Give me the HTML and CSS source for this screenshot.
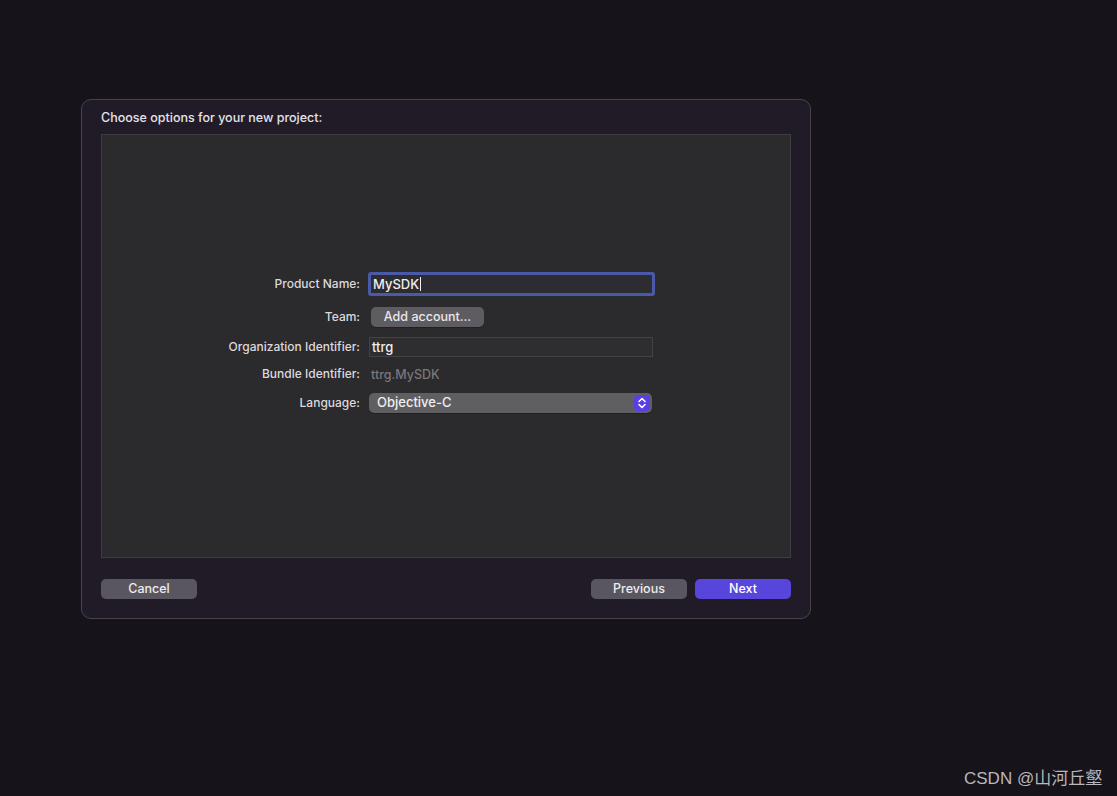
FILE: index.html
```html
<!DOCTYPE html>
<html>
<head>
<meta charset="utf-8">
<link rel="stylesheet" href="styles.css">
</head>
<body>
<div class="page">
  <div class="dialog">
    <div class="title">Choose options for your new project:</div>
    <div class="panel">
      <div class="form">
        <div class="row product">
          <div class="label">Product Name:</div>
          <div class="field focus"><span>MySDK</span><span class="caret"></span></div>
        </div>
        <div class="row team">
          <div class="label">Team:</div>
          <div class="btn-add">Add account...</div>
        </div>
        <div class="row org">
          <div class="label">Organization Identifier:</div>
          <div class="field plain">ttrg</div>
        </div>
        <div class="row bundle">
          <div class="label">Bundle Identifier:</div>
          <div class="value-dim">ttrg.MySDK</div>
        </div>
        <div class="row lang">
          <div class="label">Language:</div>
          <div class="popup">
            <span>Objective-C</span>
            <span class="stepper">
              <svg width="10" height="14" viewBox="0 0 10 14"><path d="M2 5.5 L5 2.5 L8 5.5 M2 8.5 L5 11.5 L8 8.5" fill="none" stroke="#fff" stroke-width="1.6" stroke-linecap="round" stroke-linejoin="round"/></svg>
            </span>
          </div>
        </div>
      </div>
    </div>
    <div class="footer">
      <div class="btn gray">Cancel</div>
      <div class="right">
        <div class="btn gray">Previous</div>
        <div class="btn primary">Next</div>
      </div>
    </div>
  </div>
  <div class="watermark">CSDN @山河丘壑</div>
</div>
</body>
</html>
```

FILE: styles.css
```css
html, body {
  margin: 0;
  padding: 0;
  background: #16131a;
  height: 100%;
}
body {
  font-family: "Inter", "Liberation Sans", "Noto Sans CJK SC", sans-serif;
  font-size: 13px;
  font-weight: 500;
  color: #e2dfe6;
}
.page {
  position: relative;
  width: 1117px;
  height: 796px;
  padding: 99px 0 0 81px;
  box-sizing: border-box;
}
.dialog {
  width: 730px;
  height: 520px;
  box-sizing: border-box;
  background: #211b27;
  border: 1px solid #48434f;
  border-radius: 10px;
  padding: 10px 19px 0 19px;
  display: flex;
  flex-direction: column;
}
.title {
  font-size: 12.5px;
  line-height: 16px;
  height: 16px;
  color: #e6e3ea;
}
.panel {
  margin-top: 8px;
  height: 424px;
  box-sizing: border-box;
  background: #2b2a2c;
  border: 1px solid #3f3d42;
  display: flex;
  flex-direction: column;
  padding-top: 137px;
}
.form {
  display: flex;
  flex-direction: column;
}
.row {
  display: flex;
  align-items: center;
}
.label {
  width: 258px;
  text-align: right;
  font-size: 12px;
  line-height: 14px;
  color: #dcd9de;
  padding-right: 8px;
  flex: none;
}
.product .label {
  padding-bottom: 1px;
}
.field {
  box-sizing: border-box;
  height: 23px;
  font-size: 13px;
  color: #eeeeee;
  display: flex;
  align-items: center;
}
.field.focus {
  width: 287px;
  border: 3px solid #4a5aa8;
  border-radius: 3px;
  background: #2d2c30;
  padding-left: 2px;
  padding-bottom: 1px;
  height: 24px;
}
.caret {
  display: inline-block;
  width: 1px;
  height: 14px;
  background: #f0f0f0;
  margin-left: 1px;
}
.team {
  margin-top: 10px;
  height: 21px;
}
.btn-add {
  margin-left: 3px;
  width: 113px;
  height: 20px;
  box-sizing: border-box;
  background: #5e5c60;
  border-radius: 5px;
  font-size: 12.5px;
  color: #eae8ec;
  display: flex;
  align-items: center;
  justify-content: center;
  padding-bottom: 1px;
  box-shadow: 0 1px 0 rgba(0,0,0,0.25);
}
.org {
  margin-top: 10px;
}
.field.plain {
  margin-left: 1px;
  width: 284px;
  height: 20px;
  border: 1px solid #434144;
  background: #2e2d2f;
  padding-left: 2px;
}
.bundle {
  margin-top: 7px;
  height: 20px;
}
.value-dim {
  color: #79777b;
  font-size: 12.5px;
  padding-left: 3px;
}
.lang {
  margin-top: 9px;
}
.popup {
  margin-left: 1px;
  width: 283px;
  height: 20px;
  box-sizing: border-box;
  background: #5f5e60;
  border-radius: 5px;
  display: flex;
  align-items: center;
  justify-content: space-between;
  padding-left: 8px;
  padding-right: 2px;
  font-size: 13px;
  color: #f0eef2;
  box-shadow: 0 1px 0 rgba(0,0,0,0.25);
}
.popup > span:first-child {
  padding-bottom: 2px;
}
.stepper {
  width: 16px;
  height: 16px;
  border-radius: 4px;
  background: #5b3ee6;
  display: flex;
  align-items: center;
  justify-content: center;
}
.footer {
  margin-top: 21px;
  display: flex;
  justify-content: space-between;
}
.right {
  display: flex;
  gap: 8px;
}
.btn {
  width: 96px;
  height: 20px;
  box-sizing: border-box;
  padding-bottom: 1px;
  border-radius: 5px;
  display: flex;
  align-items: center;
  justify-content: center;
  font-size: 12.5px;
  color: #ecebee;
}
.btn.gray {
  background: #5a5660;
}
.btn.primary {
  background: #5845dc;
  color: #ffffff;
}
.watermark {
  position: absolute;
  left: 964px;
  top: 764px;
  font-size: 17px;
  font-weight: 400;
  color: #b9b8bc;
  font-family: "Liberation Sans", "Noto Sans CJK SC", sans-serif;
}
```
